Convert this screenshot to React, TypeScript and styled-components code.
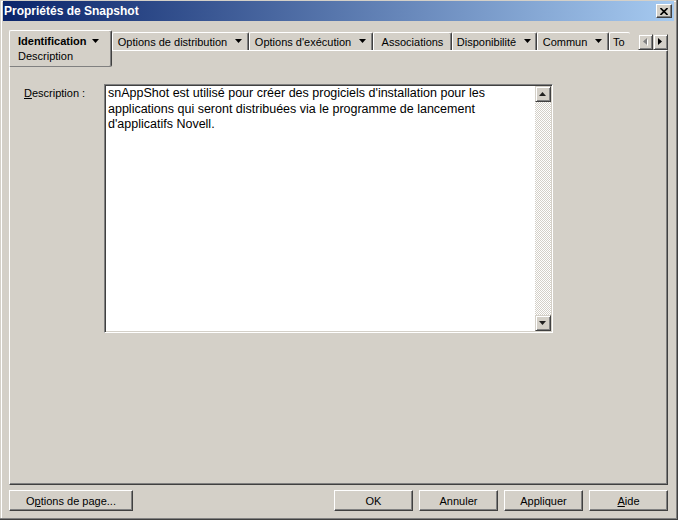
import React from "react";
import styled, { createGlobalStyle } from "styled-components";

const GlobalStyle = createGlobalStyle`
  body {
    margin: 0;
    background: #d4d0c8;
    font-family: "Liberation Sans", Arial, sans-serif;
    font-size: 11px;
    color: #000;
  }
`;

const Window = styled.div`
  box-sizing: border-box;
  width: 678px;
  height: 520px;
  display: flex;
  flex-direction: column;
  padding: 1px 4px 4px 3px;
  background: #d4d0c8;
  box-shadow: inset -1px -1px #404040, inset -2px -2px #808080,
    inset 1px 1px #d4d0c8, inset 2px 2px #fff;
`;

const TitleBar = styled.div`
  height: 20px;
  display: flex;
  align-items: center;
  justify-content: space-between;
  padding: 0 2px 0 1px;
  background: linear-gradient(to right, #0a246a, #a6caf0);
`;

const TitleText = styled.span`
  color: #fff;
  font-weight: bold;
  font-size: 12px;
`;

const CloseButton = styled.div`
  box-sizing: border-box;
  width: 16px;
  height: 14px;
  display: flex;
  align-items: center;
  justify-content: center;
  background: #d4d0c8;
  border-top: 1px solid #fff;
  border-left: 1px solid #fff;
  border-right: 1px solid #404040;
  border-bottom: 1px solid #404040;
  box-shadow: inset -1px -1px #808080;
`;

const Body = styled.div`
  flex: 1;
  display: flex;
  flex-direction: column;
  padding: 9px 6px 5px 6px;
`;

const TabRow = styled.div`
  position: relative;
  z-index: 1;
  height: 20px;
  display: flex;
  align-items: flex-start;
`;

const ActiveTab = styled.div`
  box-sizing: border-box;
  width: 103px;
  height: 37px;
  display: flex;
  flex-direction: column;
  padding: 3px 0 0 8px;
  line-height: 15px;
  background: #d4d0c8;
  border-top: 1px solid #fff;
  border-left: 1px solid #fff;
  border-right: 1px solid #404040;
  border-bottom: 1px solid #808080;
  border-radius: 2px 2px 2px 0;
  box-shadow: inset -1px 0 #808080;
`;

const TabLine = styled.div`
  display: flex;
  align-items: center;
  gap: 6px;
  font-weight: ${(p: { $bold?: boolean }) => (p.$bold ? "bold" : "normal")};
`;

const Tab = styled.div<{ $w: number; $clip?: boolean }>`
  box-sizing: border-box;
  width: ${(p) => p.$w}px;
  height: 18px;
  margin-top: 2px;
  display: flex;
  align-items: center;
  justify-content: ${(p) => (p.$clip ? "flex-start" : "center")};
  gap: 8px;
  padding-left: ${(p) => (p.$clip ? "3px" : "0")};
  white-space: nowrap;
  overflow: hidden;
  border-top: 1px solid #fff;
  border-left: 1px solid #fff;
  border-right: ${(p) => (p.$clip ? "none" : "1px solid #404040")};
  border-radius: 2px 2px 0 0;
  box-shadow: ${(p) => (p.$clip ? "none" : "inset -1px 0 #808080")};
`;

const TabScroll = styled.div`
  margin-left: auto;
  margin-top: 4px;
  display: flex;
`;

const RaisedButton = styled.div<{ $w: number; $h: number }>`
  box-sizing: border-box;
  width: ${(p) => p.$w}px;
  height: ${(p) => p.$h}px;
  display: flex;
  align-items: center;
  justify-content: center;
  background: #d4d0c8;
  border-top: 1px solid #d4d0c8;
  border-left: 1px solid #d4d0c8;
  border-right: 1px solid #404040;
  border-bottom: 1px solid #404040;
  box-shadow: inset 1px 1px #fff, inset -1px -1px #808080;
`;

const Panel = styled.div`
  box-sizing: border-box;
  height: 435px;
  padding: 33px 0 0 14px;
  border-top: 1px solid #fff;
  border-left: 1px solid #fff;
  border-right: 1px solid #404040;
  border-bottom: 1px solid #404040;
  box-shadow: inset -1px -1px #808080;
`;

const FieldRow = styled.div`
  display: grid;
  grid-template-columns: 80px 449px;
`;

const Label = styled.div`
  padding-top: 3px;
`;

const TextBox = styled.div`
  box-sizing: border-box;
  width: 449px;
  height: 249px;
  display: flex;
  background: #fff;
  border-top: 1px solid #808080;
  border-left: 1px solid #808080;
  border-right: 1px solid #fff;
  border-bottom: 1px solid #fff;
  box-shadow: inset 1px 1px #404040, inset -1px -1px #d4d0c8;
  padding: 1px;
`;

const TextContent = styled.div`
  flex: 1;
  padding: 0 0 0 2px;
  font-size: 12.5px;
  line-height: 15.5px;
  white-space: pre-wrap;
`;

const ScrollBar = styled.div`
  width: 16px;
  display: flex;
  flex-direction: column;
`;

const ScrollTrack = styled.div`
  flex: 1;
  background-color: #fff;
  background-image: conic-gradient(
    #d4d0c8 25%,
    #fff 0 50%,
    #d4d0c8 0 75%,
    #fff 0
  );
  background-size: 2px 2px;
`;

const ButtonRow = styled.div`
  display: flex;
  gap: 6px;
  margin-top: 5px;
`;

const Spacer = styled.div`
  flex: 1;
`;

const Button = styled.div<{ $wide?: boolean }>`
  box-sizing: border-box;
  width: ${(p) => (p.$wide ? "124px" : "79px")};
  height: 21px;
  display: flex;
  align-items: center;
  justify-content: center;
  background: #d4d0c8;
  border-top: 1px solid #fff;
  border-left: 1px solid #fff;
  border-right: 1px solid #404040;
  border-bottom: 1px solid #404040;
  box-shadow: inset -1px -1px #808080;
`;

const Key = styled.span`
  text-decoration: underline;
`;

type Dir = "up" | "down" | "left" | "right";

const Arrow: React.FC<{ dir: Dir; color?: string; shadow?: boolean }> = ({
  dir,
  color = "#000",
  shadow,
}) => {
  const horiz = dir === "left" || dir === "right";
  const pts: Record<Dir, string> = {
    down: "0,0 7,0 3.5,4",
    up: "0,4 7,4 3.5,0",
    right: "0,0 0,7 4,3.5",
    left: "4,0 4,7 0,3.5",
  };
  return (
    <svg
      width={horiz ? 5 : 8}
      height={horiz ? 8 : 5}
      viewBox={horiz ? "0 0 5 8" : "0 0 8 5"}
    >
      {shadow && (
        <polygon points={pts[dir]} fill="#fff" transform="translate(1,1)" />
      )}
      <polygon points={pts[dir]} fill={color} />
    </svg>
  );
};

const tabs = [
  { label: "Options de distribution", w: 137, menu: true },
  { label: "Options d'exécution", w: 124, menu: true },
  { label: "Associations", w: 79, menu: false },
  { label: "Disponibilité", w: 85, menu: true },
  { label: "Commun", w: 72, menu: true },
];

const description =
  "snAppShot est utilisé pour créer des progiciels d'installation pour les\napplications qui seront distribuées via le programme de lancement\nd'applicatifs Novell.";

const App: React.FC = () => {
  return (
    <>
      <GlobalStyle />
      <Window>
        <TitleBar>
          <TitleText>Propriétés de Snapshot</TitleText>
          <CloseButton>
            <svg width="8" height="7" viewBox="0 0 8 7">
              <path
                d="M0.5 0 L7.5 7 M7.5 0 L0.5 7"
                stroke="#000"
                strokeWidth="1.6"
              />
            </svg>
          </CloseButton>
        </TitleBar>
        <Body>
          <TabRow>
            <ActiveTab>
              <TabLine $bold>
                Identification <Arrow dir="down" />
              </TabLine>
              <TabLine>Description</TabLine>
            </ActiveTab>
            {tabs.map((t) => (
              <Tab key={t.label} $w={t.w}>
                {t.label}
                {t.menu && <Arrow dir="down" />}
              </Tab>
            ))}
            <Tab $w={21} $clip>
              To
            </Tab>
            <TabScroll>
              <RaisedButton $w={15} $h={16}>
                <Arrow dir="left" color="#808080" shadow />
              </RaisedButton>
              <RaisedButton $w={15} $h={16}>
                <Arrow dir="right" />
              </RaisedButton>
            </TabScroll>
          </TabRow>
          <Panel>
            <FieldRow>
              <Label>
                <Key>D</Key>escription :
              </Label>
              <TextBox>
                <TextContent>{description}</TextContent>
                <ScrollBar>
                  <RaisedButton $w={16} $h={16}>
                    <Arrow dir="up" color="#202020" />
                  </RaisedButton>
                  <ScrollTrack />
                  <RaisedButton $w={16} $h={16}>
                    <Arrow dir="down" color="#202020" />
                  </RaisedButton>
                </ScrollBar>
              </TextBox>
            </FieldRow>
          </Panel>
          <ButtonRow>
            <Button $wide>
              O<Key>p</Key>tions de page...
            </Button>
            <Spacer />
            <Button>OK</Button>
            <Button>Annuler</Button>
            <Button>Appliquer</Button>
            <Button>
              <Key>A</Key>ide
            </Button>
          </ButtonRow>
        </Body>
      </Window>
    </>
  );
};

export default App;
